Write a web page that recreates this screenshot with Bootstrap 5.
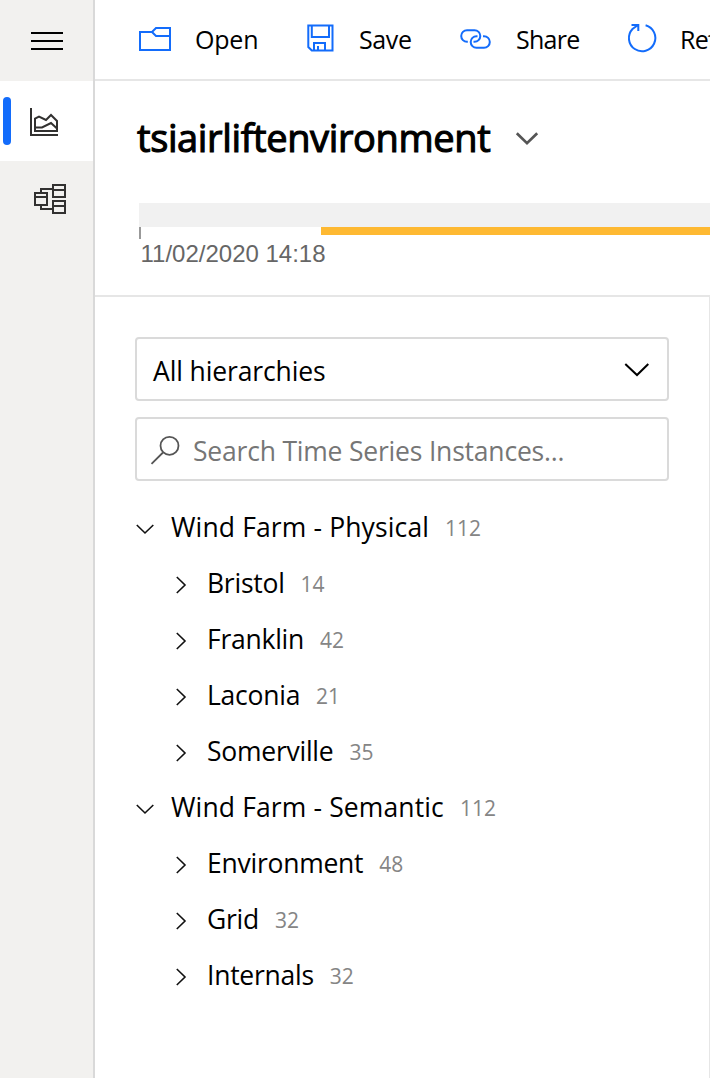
<!DOCTYPE html>
<html lang="en">
<head>
<meta charset="utf-8">
<meta name="viewport" content="width=device-width, initial-scale=1">
<title>tsiairliftenvironment</title>
<link rel="stylesheet" href="https://cdn.jsdelivr.net/npm/bootstrap@5.3.0/dist/css/bootstrap.min.css">
<style>
  body { font-family: "Open Sans", "Noto Sans", sans-serif; color: #000; background: #fff; }
  svg { display: block; fill: none; flex: none; }
  .rail { width: 95px; background: #f2f1ef; border-right: 2px solid #d9d9d9; }
  .rail-item { height: 80px; width: 93px; }
  .rail-item.first { height: 81px; }
  .rail-item.current { background: #fff; }
  .marker { width: 8px; height: 48px; border-radius: 4px; background: #136cfb; margin-left: 3px; }
  .toolbar { height: 81px; border-bottom: 2px solid #e6e6e6; padding-left: 43px; }
  .cmd { height: 79px; flex: none; font-size: 25px; line-height: 79px; white-space: nowrap; }
  .cmd svg { stroke: #136cfb; stroke-width: 2; margin-right: 20px; }
  .cmd-open { width: 166px; letter-spacing: -.2px; }
  .cmd-open svg { margin-right: 21px; }
  .cmd-save { width: 156px; letter-spacing: -.4px; }
  .cmd-save svg { margin-right: 21px; }
  .cmd-share { width: 166px; letter-spacing: -.75px; }
  .cmd-refresh { letter-spacing: -.8px; }
  .env { height: 216px; border-bottom: 2px solid #e6e6e6; }
  .env-title { height: 122px; padding-left: 42px; }
  .env-name { font-size: 38px; font-weight: 400; -webkit-text-stroke: 1.1px #000; letter-spacing: -.38px; line-height: 113px; width: 378px; white-space: nowrap; margin: 0; }
  .timeline { margin-left: 44px; }
  .track { height: 24px; background: #f1f1f1; }
  .tick { width: 2px; height: 12px; background: #999; }
  .range { height: 8px; margin-left: 180px; background: #feb932; }
  .stamp { font: 24px/28px "Liberation Sans", Arial, sans-serif; color: #666; padding-left: 1.5px; margin-top: 1px; }
  .panel { border-right: 1px solid #e6e6e6; padding: 40px 40px 0 40px; }
  .field { height: 64px; border: 2px solid #dadada; border-radius: 4px; font-size: 26.5px; line-height: 64px; letter-spacing: -.2px; white-space: nowrap; }
  .sel { letter-spacing: -.12px; }
  .hint { color: #767676; }
  .tree { margin-top: 19px; }
  .node { height: 56px; font-size: 26.5px; line-height: 54px; letter-spacing: .13px; white-space: nowrap; }
  .node svg { stroke: #111; stroke-width: 1.6; }
  .kid { padding-left: 36px; letter-spacing: -.25px; }
  .tally { font-size: 21px; line-height: 56px; letter-spacing: 0; color: #858585; font-weight: 400; margin-left: 16px; }
</style>
</head>
<body>
<div class="d-flex vh-100 overflow-hidden">
  <nav class="rail flex-shrink-0">
    <div class="rail-item first">
      <svg width="93" height="81" stroke="#000" stroke-width="2"><path d="M31 33H63M31 41H63M31 49H63"/></svg>
    </div>
    <div class="rail-item current d-flex align-items-center">
      <div class="marker"></div>
      <svg width="60" height="80" viewBox="11 81 60 80" stroke="#323130" stroke-width="2"><path d="M31 108V135H58M35 131V118.5L39 116.5L46 120L51 115L57 121V131ZM35 127.5H42L51 123L57 128.5"/></svg>
    </div>
    <div class="rail-item">
      <svg width="93" height="80" viewBox="0 161 93 80" stroke="#323130" stroke-width="2"><path d="M35 193H47V205H35ZM35 197H47M53 185H65V197H53ZM53 190H65M53 201H65V213H53ZM53 206H65M41 192V189H53M41 206V209H53"/></svg>
    </div>
  </nav>
  <main class="flex-grow-1 d-flex flex-column overflow-hidden">
    <header class="toolbar d-flex overflow-hidden">
      <div class="cmd cmd-open d-flex"><svg width="36" height="79" viewBox="138 0 36 79"><path d="M140 32H152L156 28H170V50H140ZM152 32L156 36H170"/></svg><span class="lbl">Open</span></div>
      <div class="cmd cmd-save d-flex"><svg width="34" height="79" viewBox="304 0 34 79"><path d="M308.3 25.6H332.5V50.5H311.8L308.3 47ZM311.8 26V37H329V26M314 50V43H325V50M318 46V50"/></svg><span class="lbl">Save</span></div>
      <div class="cmd cmd-share d-flex"><svg width="36" height="79" viewBox="460 0 36 79"><path d="M467.8 41.8H467A5.8 5.8 0 0 1 467 30.2H474.5A5.8 5.8 0 0 1 474.5 41.8H473.5M483 36.2H484A5.8 5.8 0 0 1 484 47.8H476.5A5.8 5.8 0 0 1 476.5 36.2H477.5"/></svg><span class="lbl">Share</span></div>
      <div class="cmd cmd-refresh d-flex"><svg width="34" height="79" viewBox="626 0 34 79"><path d="M645.6 25.3A13.2 13.2 0 1 1 632.5 29L638 25M631.5 25H638.3V31"/></svg><span class="lbl">Refresh</span></div>
    </header>
    <section class="env">
      <div class="env-title d-flex">
        <h1 class="env-name">tsiairliftenvironment</h1>
        <svg width="24" height="122" viewBox="515 81 24 122" stroke="#555" stroke-width="2.7"><path d="M516.8 133.2L527 143.2L537.2 133.2"/></svg>
      </div>
      <div class="timeline">
        <div class="track"></div>
        <div class="d-flex"><div class="tick"></div><div class="range flex-grow-1"></div></div>
        <div class="stamp">11/02/2020 14:18</div>
      </div>
    </section>
    <section class="panel flex-grow-1">
      <div class="field d-flex justify-content-between mb-3 ps-3">
        <span class="sel">All hierarchies</span>
        <svg width="44" height="60" viewBox="623 339 44 60" stroke="#000" stroke-width="2"><path d="M625.3 364L637 375L648.3 364"/></svg>
      </div>
      <div class="field d-flex">
        <svg width="56" height="60" viewBox="137 419 56 60" stroke="#555" stroke-width="1.8"><circle cx="169.5" cy="445.8" r="9"/><path d="M163 452.5L151.5 463.8"/></svg>
        <span class="hint">Search Time Series Instances...</span>
      </div>
      <div class="tree">
        <div class="node d-flex"><svg width="36" height="56"><path d="M1.8 25L10 33L18.3 25"/></svg><span>Wind Farm - Physical</span><span class="tally">112</span></div>
        <div class="node kid d-flex"><svg width="36" height="56"><path d="M5.8 21L14 29L5.8 37"/></svg><span>Bristol</span><span class="tally">14</span></div>
        <div class="node kid d-flex"><svg width="36" height="56"><path d="M5.8 21L14 29L5.8 37"/></svg><span>Franklin</span><span class="tally">42</span></div>
        <div class="node kid d-flex"><svg width="36" height="56"><path d="M5.8 21L14 29L5.8 37"/></svg><span>Laconia</span><span class="tally">21</span></div>
        <div class="node kid d-flex"><svg width="36" height="56"><path d="M5.8 21L14 29L5.8 37"/></svg><span>Somerville</span><span class="tally">35</span></div>
        <div class="node d-flex"><svg width="36" height="56"><path d="M1.8 25L10 33L18.3 25"/></svg><span>Wind Farm - Semantic</span><span class="tally">112</span></div>
        <div class="node kid d-flex"><svg width="36" height="56"><path d="M5.8 21L14 29L5.8 37"/></svg><span>Environment</span><span class="tally">48</span></div>
        <div class="node kid d-flex"><svg width="36" height="56"><path d="M5.8 21L14 29L5.8 37"/></svg><span>Grid</span><span class="tally">32</span></div>
        <div class="node kid d-flex"><svg width="36" height="56"><path d="M5.8 21L14 29L5.8 37"/></svg><span>Internals</span><span class="tally">32</span></div>
      </div>
    </section>
  </main>
</div>
<script src="https://cdn.jsdelivr.net/npm/bootstrap@5.3.0/dist/js/bootstrap.bundle.min.js"></script>
</body>
</html>
